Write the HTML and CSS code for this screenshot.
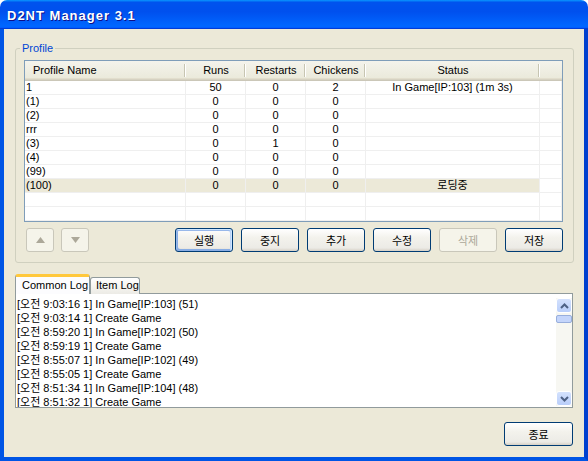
FILE: index.html
```html
<!DOCTYPE html>
<html>
<head>
<meta charset="utf-8">
<link rel="stylesheet" href="styles.css">
</head>
<body>
<div class="window">
  <div class="titlebar"><span class="title">D2NT Manager 3.1</span></div>
  <div class="client">
    <fieldset class="group">
      <legend>Profile</legend>
      <div class="list">
        <div class="row head">
          <div class="h name">Profile Name</div>
          <div class="h">Runs</div>
          <div class="h">Restarts</div>
          <div class="h">Chickens</div>
          <div class="h">Status</div>
          <div class="h last"></div>
        </div>
        <div class="row"><div class="c name">1</div><div class="c">50</div><div class="c">0</div><div class="c">2</div><div class="c">In Game[IP:103] (1m 3s)</div><div class="c"></div></div>
        <div class="row"><div class="c name">(1)</div><div class="c">0</div><div class="c">0</div><div class="c">0</div><div class="c"></div><div class="c"></div></div>
        <div class="row"><div class="c name">(2)</div><div class="c">0</div><div class="c">0</div><div class="c">0</div><div class="c"></div><div class="c"></div></div>
        <div class="row"><div class="c name">rrr</div><div class="c">0</div><div class="c">0</div><div class="c">0</div><div class="c"></div><div class="c"></div></div>
        <div class="row"><div class="c name">(3)</div><div class="c">0</div><div class="c">1</div><div class="c">0</div><div class="c"></div><div class="c"></div></div>
        <div class="row"><div class="c name">(4)</div><div class="c">0</div><div class="c">0</div><div class="c">0</div><div class="c"></div><div class="c"></div></div>
        <div class="row"><div class="c name">(99)</div><div class="c">0</div><div class="c">0</div><div class="c">0</div><div class="c"></div><div class="c"></div></div>
        <div class="row sel"><div class="c name">(100)</div><div class="c">0</div><div class="c">0</div><div class="c">0</div><div class="c">로딩중</div><div class="c"></div></div>
        <div class="row"><div class="c name"></div><div class="c"></div><div class="c"></div><div class="c"></div><div class="c"></div><div class="c"></div></div>
        <div class="row"><div class="c name"></div><div class="c"></div><div class="c"></div><div class="c"></div><div class="c"></div><div class="c"></div></div>
      </div>
      <div class="toolbar">
        <div class="arrows">
          <button class="btn arrow" disabled><svg width="9" height="6" viewBox="0 0 9 6"><path d="M4.5 0L9 6H0z" fill="#ACA899"/></svg></button>
          <button class="btn arrow" disabled><svg width="9" height="6" viewBox="0 0 9 6"><path d="M0 0H9L4.5 6z" fill="#ACA899"/></svg></button>
        </div>
        <div class="actions">
          <button class="btn default">실행</button>
          <button class="btn">중지</button>
          <button class="btn">추가</button>
          <button class="btn">수정</button>
          <button class="btn" disabled>삭제</button>
          <button class="btn">저장</button>
        </div>
      </div>
    </fieldset>
    <div class="tabs">
      <div class="tab active">Common Log</div>
      <div class="tab">Item Log</div>
    </div>
    <div class="logpane">
      <div class="loglines">
        <div>[오전 9:03:16 1] In Game[IP:103] (51)</div>
        <div>[오전 9:03:14 1] Create Game</div>
        <div>[오전 8:59:20 1] In Game[IP:102] (50)</div>
        <div>[오전 8:59:19 1] Create Game</div>
        <div>[오전 8:55:07 1] In Game[IP:102] (49)</div>
        <div>[오전 8:55:05 1] Create Game</div>
        <div>[오전 8:51:34 1] In Game[IP:104] (48)</div>
        <div>[오전 8:51:32 1] Create Game</div>
      </div>
      <div class="scrollbar">
        <div class="sb-btn"><svg width="9" height="6" viewBox="0 0 9 6"><path d="M1 5L4.5 1.5L8 5" fill="none" stroke="#4D6185" stroke-width="2"/></svg></div>
        <div class="sb-thumb"></div>
        <div class="sb-track"></div>
        <div class="sb-btn"><svg width="9" height="6" viewBox="0 0 9 6"><path d="M1 1L4.5 4.5L8 1" fill="none" stroke="#4D6185" stroke-width="2"/></svg></div>
      </div>
    </div>
    <div class="footer">
      <button class="btn exit">종료</button>
    </div>
  </div>
</div>
</body>
</html>
```
FILE: styles.css
```css
* { box-sizing: border-box; }
body {
  margin: 0;
  background: #ffffff;
  font-family: "Liberation Sans", "Noto Sans CJK KR", sans-serif;
  font-size: 11px;
  color: #000;
}
.window {
  width: 588px;
  height: 461px;
  display: flex;
  flex-direction: column;
}
.titlebar {
  height: 29px;
  flex: none;
  border-radius: 7px 7px 0 0;
  background: linear-gradient(180deg, #0997ff, #0053ee 8%, #0050ee 40%, #0066ff 88%, #0066ff 93%, #005bff 95%, #003dd7 96%, #003dd7);
  padding: 8px 0 0 7px;
}
.title {
  color: #fff;
  font: bold 13px/16px "Liberation Sans", sans-serif;
  letter-spacing: 1px;
  text-shadow: 1px 1px #0f1089;
}
.client {
  flex: 1;
  min-height: 0;
  background: #ECE9D8;
  border: 4px solid #0055E5;
  border-top: 0;
  border-right-color: #0040CF;
  display: flex;
  flex-direction: column;
  padding: 0 10px 0 11px;
}
.group {
  margin: 12px 0 0;
  padding: 5px 10px 10px 8px;
  border: 1px solid #D0D0BF;
  border-radius: 3px;
  min-width: 0;
}
.group legend {
  padding: 0 2px;
  margin-left: -4px;
  color: #0046D5;
  line-height: 14px;
}
.list {
  border: 1px solid #7F9DB9;
  background: #fff;
}
.row {
  display: grid;
  grid-template-columns: 161px 60px 60px 60px 174px 22px;
}
.h {
  height: 20px;
  line-height: 18px;
  text-align: center;
  background:
    linear-gradient(#C7C5B2, #C7C5B2) no-repeat right 1px top 3px / 1px 13px,
    linear-gradient(#fff, #fff) no-repeat right 0 top 3px / 1px 13px,
    linear-gradient(180deg, #F4F3EC, #EBEADB 85%, #E2DECD 85%, #E2DECD 90%, #D6D2C2 90%, #D6D2C2 95%, #CBC7B8 95%);
}
.h.name { text-align: left; padding-left: 8px; }
.h.last {
  background: linear-gradient(180deg, #F4F3EC, #EBEADB 85%, #E2DECD 85%, #E2DECD 90%, #D6D2C2 90%, #D6D2C2 95%, #CBC7B8 95%);
}
.c {
  height: 14px;
  line-height: 13px;
  text-align: center;
  white-space: nowrap;
  overflow: hidden;
  border-right: 1px solid #EFEFEF;
  border-bottom: 1px solid #EFEFEF;
}
.c.name { text-align: left; padding-left: 1px; }
.sel .c { background: #ECE9D8; }
.sel .c:last-child { background: #fff; }
.toolbar {
  display: flex;
  align-items: center;
  margin-top: 6px;
}
.arrows {
  display: flex;
  gap: 7px;
  margin-left: 2px;
}
.actions {
  display: flex;
  gap: 8px;
  margin-left: auto;
}
.btn {
  width: 58px;
  height: 24px;
  padding: 0;
  border: 1px solid #003C74;
  border-radius: 3px;
  background: linear-gradient(180deg, #ffffff, #F3F2EC 40%, #ECEBE6 86%, #D6D0C5);
  font: 11px "Noto Sans CJK KR", "Liberation Sans", sans-serif;
  color: #000;
  display: flex;
  align-items: center;
  justify-content: center;
}
.btn.default {
  box-shadow: inset -1px 1px #CEE7FF, inset 1px 2px #98B8EA, inset -2px 2px #BCD4F6, inset 1px -1px #89ADE4, inset 2px -2px #89ADE4;
}
.btn:disabled {
  border-color: #C9C7BA;
  color: #ACA899;
  background: #F5F4EA;
}
.btn.arrow { width: 28px; }
.tabs {
  display: flex;
  align-items: flex-end;
  margin-top: 11px;
  margin-bottom: -1px;
  position: relative;
  z-index: 1;
}
.tab {
  border: 1px solid #919B9C;
  border-bottom: 0;
  border-radius: 3px 3px 0 0;
  height: 17px;
  width: 50px;
  line-height: 15px;
  padding-left: 5px;
  background: linear-gradient(180deg, #ffffff, #F4F3EE 60%, #ECEBE6);
}
.tab.active {
  width: 75px;
  height: 20px;
  padding-left: 6px;
  line-height: 16px;
  background: #FCFCFE;
  border-top: 3px solid #FFC83C;
  border-bottom: 0;
}
.logpane {
  height: 115px;
  flex: none;
  border: 1px solid #919B9C;
  background: #fff;
  display: flex;
  margin-right: 1px;
}
.loglines {
  flex: 1;
  padding: 3px 0 0 1px;
  line-height: 14px;
  overflow: hidden;
  white-space: nowrap;
}
.scrollbar {
  width: 16px;
  margin: 4px 0 1px;
  display: flex;
  flex-direction: column;
  background: #F7F7F2;
}
.sb-btn {
  height: 15px;
  border: 1px solid #fff;
  border-radius: 3px;
  background: linear-gradient(180deg, #D3E1FD, #B9CEFA);
  display: flex;
  align-items: center;
  justify-content: center;
}
.sb-thumb {
  height: 8px;
  margin-top: 2px;
  border: 1px solid #98AEDC;
  border-radius: 2px;
  background: #C4D5FB;
}
.sb-track { flex: 1; }
.footer {
  display: flex;
  justify-content: flex-end;
  margin-top: 14px;
  margin-right: 1px;
}
.btn.exit { width: 69px; }
```
